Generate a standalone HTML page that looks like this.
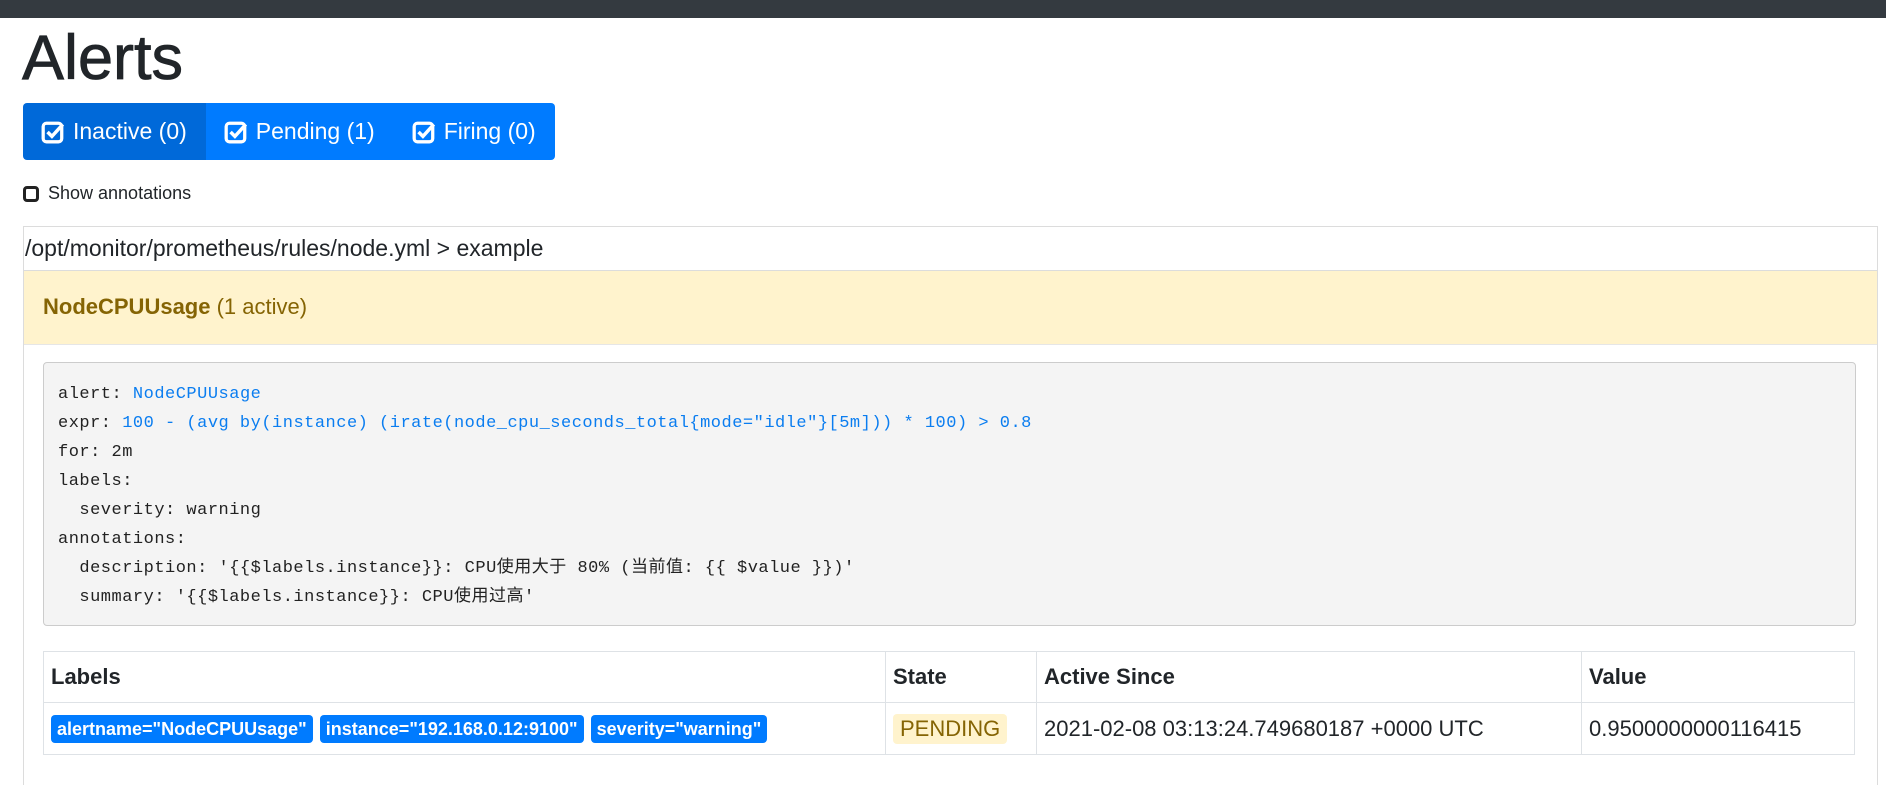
<!DOCTYPE html>
<html><head><meta charset="utf-8"><style>
*{box-sizing:border-box;margin:0;padding:0}
html,body{width:1886px;height:785px;overflow:hidden}
body{background:#fff;font-family:"Liberation Sans","Noto Sans CJK SC",sans-serif;color:#212529;position:relative}
.top{height:18px;background:#343a40}
h1{position:absolute;left:22px;top:22px;font-size:63px;font-weight:500;line-height:72px;color:#212529;-webkit-text-stroke:0.8px #212529}
.btns{position:absolute;left:23px;top:103px;height:57px;display:flex;border-radius:4px;overflow:hidden}
.btn{background:#007bff;color:#fff;font-size:23px;line-height:57px;padding:0 19px 0 18px;display:flex;align-items:center}
.btn.a{background:#0069d9}
.btn svg{margin-right:8px}
.chk{position:absolute;left:23px;top:183px;font-size:18px;display:flex;align-items:center;color:#212529}
.chk i{width:16px;height:16px;border:3px solid #222;border-radius:4px;margin-right:9px;display:inline-block}
.card{position:absolute;left:23px;top:226px;width:1855px;height:580px;border:1px solid #dcdcdc}
.path{height:44px;line-height:42px;font-size:23px;padding-left:1px;border-bottom:1px solid #dcdcdc}
.warn{height:74px;background:#fff3cd;color:#856404;font-size:22px;line-height:72px;padding-left:19px;border-bottom:1px solid #e6e6e6}
.warn b{font-weight:bold}
pre{position:absolute;left:19px;top:135px;width:1813px;height:264px;background:#f4f4f4;border:1px solid #ccc;border-radius:4px;padding:17px 14px;font-family:"Liberation Mono","Noto Sans CJK SC",monospace;font-size:17px;letter-spacing:0.5px;line-height:29px;color:#222}
.s{color:#0a7df0}
table{position:absolute;left:19px;top:424px;width:1812px;border-collapse:collapse;font-size:22px}
td,th{border:1px solid #dee2e6;text-align:left;padding:0 7px}
th{height:51px;font-weight:bold}
td{height:52px}
.bd{display:inline-block;background:#007bff;color:#fff;font-weight:bold;font-size:18px;padding:3px 6px;border-radius:4px;margin-right:1px;line-height:22px}
.pd{display:inline-block;background:#fff3cd;color:#856404;padding:2px 7px;border-radius:4px;font-size:22px}
</style></head><body>
<div class="top"></div>
<h1>Alerts</h1>
<div class="btns">
<div class="btn a"><svg width="24" height="24" viewBox="0 0 22 22"><rect x="2" y="3" width="17" height="17" rx="3" fill="none" stroke="#fff" stroke-width="3"/><path d="M6 11l4 4 10-11" fill="none" stroke="#fff" stroke-width="3.2"/></svg>Inactive (0)</div>
<div class="btn"><svg width="24" height="24" viewBox="0 0 22 22"><rect x="2" y="3" width="17" height="17" rx="3" fill="none" stroke="#fff" stroke-width="3"/><path d="M6 11l4 4 10-11" fill="none" stroke="#fff" stroke-width="3.2"/></svg>Pending (1)</div>
<div class="btn"><svg width="24" height="24" viewBox="0 0 22 22"><rect x="2" y="3" width="17" height="17" rx="3" fill="none" stroke="#fff" stroke-width="3"/><path d="M6 11l4 4 10-11" fill="none" stroke="#fff" stroke-width="3.2"/></svg>Firing (0)</div>
</div>
<div class="chk"><i></i>Show annotations</div>
<div class="card">
<div class="path">/opt/monitor/prometheus/rules/node.yml &gt; example</div>
<div class="warn"><b>NodeCPUUsage</b> (1 active)</div>
<pre>alert: <span class="s">NodeCPUUsage</span>
expr: <span class="s">100 - (avg by(instance) (irate(node_cpu_seconds_total{mode="idle"}[5m])) * 100) &gt; 0.8</span>
for: 2m
labels:
  severity: warning
annotations:
  description: '{{$labels.instance}}: CPU使用大于 80% (当前值: {{ $value }})'
  summary: '{{$labels.instance}}: CPU使用过高'</pre>
<table>
<tr><th style="width:842px">Labels</th><th style="width:151px">State</th><th style="width:545px">Active Since</th><th>Value</th></tr>
<tr><td><span class="bd">alertname="NodeCPUUsage"</span> <span class="bd">instance="192.168.0.12:9100"</span> <span class="bd">severity="warning"</span></td><td><span class="pd">PENDING</span></td><td>2021-02-08 03:13:24.749680187 +0000 UTC</td><td>0.9500000000116415</td></tr>
</table>
</div>
</body></html>
